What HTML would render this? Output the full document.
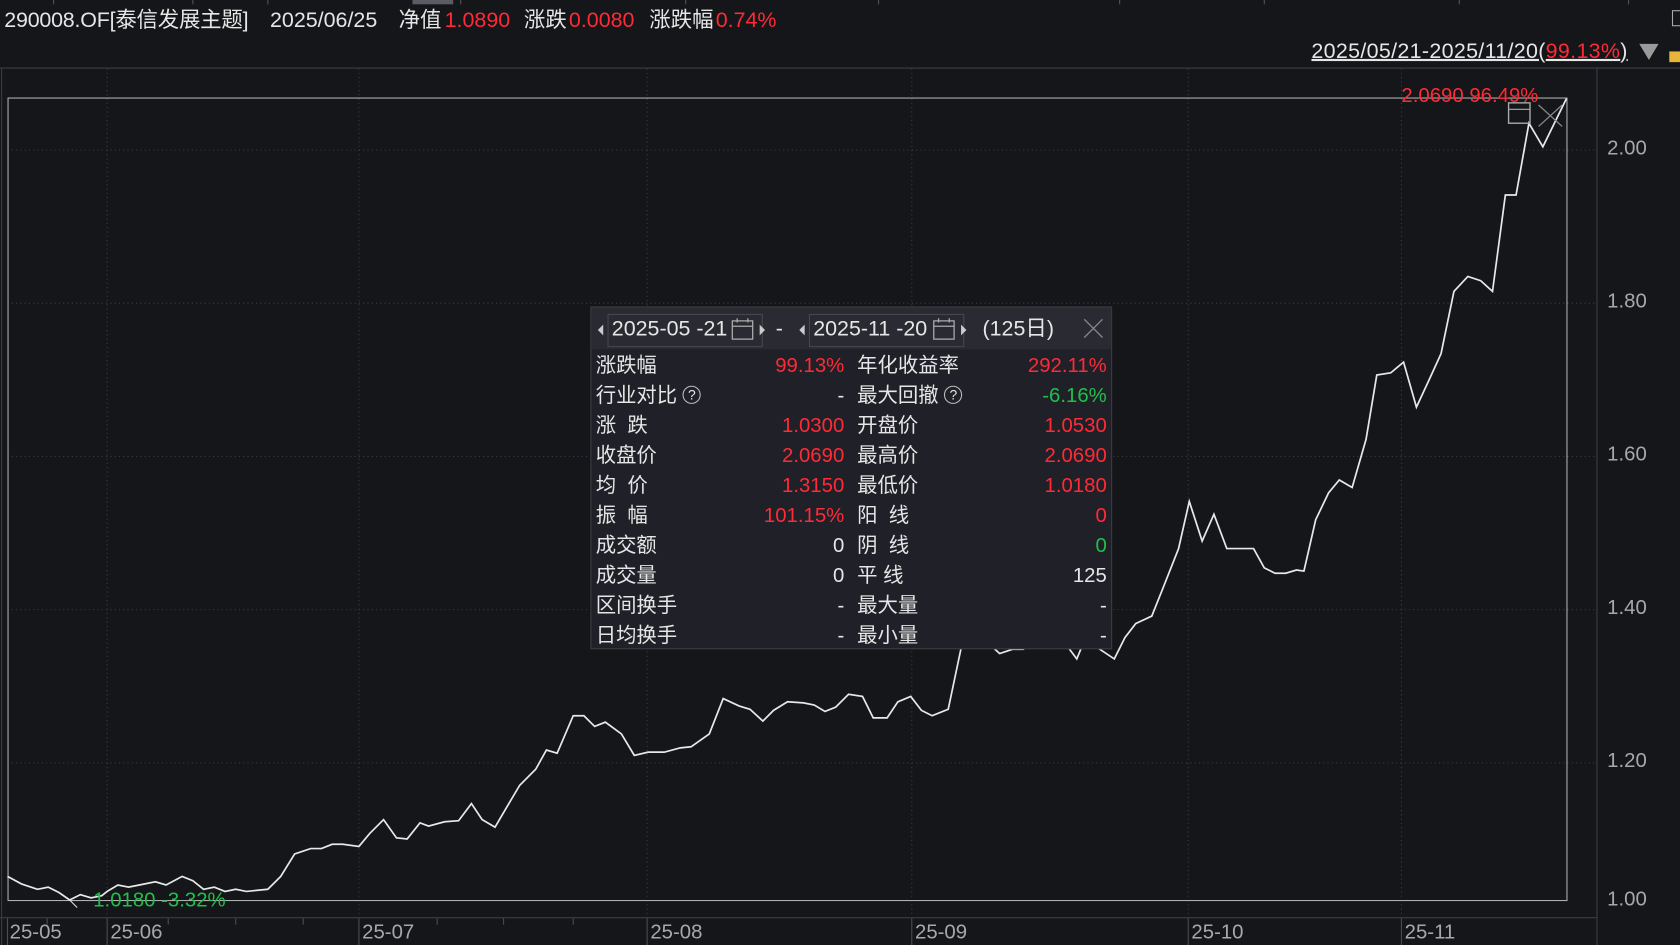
<!DOCTYPE html>
<html><head><meta charset="utf-8"><style>
html,body{margin:0;padding:0;background:#141619;width:1680px;height:945px;overflow:hidden}
#w{position:absolute;left:0;top:0;width:1568px;height:882px;transform:scale(1.0714286);transform-origin:0 0;font-family:"Liberation Sans","Noto Sans CJK SC",sans-serif;color:#e6e6e6}
.t{position:absolute;white-space:nowrap}
.r{color:#ff2a36}.g{color:#1fc04a}
.h{position:absolute;top:7px;font-size:20px;line-height:24px;height:24px;white-space:nowrap}
.ax{position:absolute;font-size:19px;color:#a8a8a8;white-space:nowrap}
#p{position:absolute;left:551px;top:286px;width:487px;height:320px;background:#202128;border:1px solid #3a3c44;box-sizing:border-box;font-size:19px}
#ph{position:absolute;left:0;top:0;width:100%;height:39px;background:#2a2b32}
.row{position:absolute;left:0;width:100%;height:28px;line-height:28px}
.row span{position:absolute}
.q{font-size:13px;border:1.5px solid #bbb;border-radius:50%;display:inline-block;width:15px;height:15px;line-height:15px;text-align:center;position:static!important;vertical-align:2px}
</style></head><body><div id="w">
<svg width="1568" height="882" style="position:absolute;left:0;top:0">
<rect x="385" y="0" width="38" height="4" fill="#5a5b63"/>
<g stroke="#555" stroke-width="1">
<line x1="50" y1="0" x2="50" y2="4"/><line x1="180" y1="0" x2="180" y2="4"/><line x1="250" y1="0" x2="250" y2="4"/><line x1="430" y1="0" x2="430" y2="4"/><line x1="640" y1="0" x2="640" y2="4"/><line x1="820" y1="0" x2="820" y2="4"/><line x1="1045" y1="0" x2="1045" y2="4"/><line x1="1180" y1="0" x2="1180" y2="4"/><line x1="1362" y1="0" x2="1362" y2="4"/><line x1="1520" y1="0" x2="1520" y2="4"/>
</g>
<line x1="0" y1="63.5" x2="1568" y2="63.5" stroke="#3a3d44"/>
<line x1="1.5" y1="64" x2="1.5" y2="882" stroke="#3a3d44"/>
<line x1="1490.5" y1="64" x2="1490.5" y2="882" stroke="#3a3d44"/>
<line x1="0" y1="856.5" x2="1490" y2="856.5" stroke="#3a3d44"/>
<g stroke="#3c3f46" stroke-dasharray="1,3">
<line x1="7" y1="140" x2="1490" y2="140"/><line x1="7" y1="283" x2="1490" y2="283"/><line x1="7" y1="426" x2="1490" y2="426"/><line x1="7" y1="569" x2="1490" y2="569"/><line x1="7" y1="712" x2="1490" y2="712"/>
<line x1="100" y1="64" x2="100" y2="856"/><line x1="335" y1="64" x2="335" y2="856"/><line x1="604" y1="64" x2="604" y2="856"/><line x1="851" y1="64" x2="851" y2="856"/><line x1="1109" y1="64" x2="1109" y2="856"/><line x1="1308" y1="64" x2="1308" y2="856"/>
</g>
<g stroke="#4a4d55"><line x1="7" y1="857" x2="7" y2="882"/><line x1="100" y1="857" x2="100" y2="882"/><line x1="335" y1="857" x2="335" y2="882"/><line x1="604" y1="857" x2="604" y2="882"/><line x1="851" y1="857" x2="851" y2="882"/><line x1="1109" y1="857" x2="1109" y2="882"/><line x1="1308" y1="857" x2="1308" y2="882"/>
<line x1="44" y1="857" x2="44" y2="863"/><line x1="157" y1="857" x2="157" y2="863"/><line x1="220" y1="857" x2="220" y2="863"/><line x1="283" y1="857" x2="283" y2="863"/><line x1="408" y1="857" x2="408" y2="863"/><line x1="470" y1="857" x2="470" y2="863"/><line x1="535" y1="857" x2="535" y2="863"/></g>
<rect x="7.5" y="91.5" width="1455" height="749" fill="none" stroke="#b0b0b0" stroke-width="1"/>
<polyline fill="none" stroke="#e8e8e8" stroke-width="1.6" points="7,818 20,825 35,830 45,828 55,833 65,840 75,835 85,838 95,836 100,832 110,826 120,828 130,826 145,823 155,826 170,818 180,822 190,830 200,828 210,832 220,830 230,832 250,830 262,818 275,797 290,792 300,792 310,788 320,788 335,790 345,778 358,765 370,782 380,783 392,768 400,771 415,767 428,766 440,750 450,765 462,772 472,755 485,733 500,718 510,700 520,703 535,668 545,668 555,678 565,674 580,685 592,705 605,702 620,702 635,698 645,697 662,685 675,652 690,659 700,662 712,673 722,663 735,655 750,656 760,658 770,664 780,660 792,648 805,650 815,670 828,670 838,655 850,650 860,663 870,668 885,662 897,605 910,600 922,600 933,610 945,606 955,606 965,600 980,605 990,595 1005,615 1012,598 1025,605 1040,615 1050,595 1060,582 1075,575 1085,550 1100,512 1110,468 1122,505 1133,480 1145,512 1158,512 1170,512 1180,530 1190,535 1200,535 1210,532 1217,533 1228,485 1240,460 1250,448 1262,455 1275,410 1285,350 1298,348 1310,338 1322,380 1335,352 1345,330 1357,272 1370,258 1382,262 1393,272 1405,182 1415,182 1427,115 1440,137 1462,92"/>
<line x1="65" y1="840" x2="72" y2="847" stroke="#ddd"/>
<rect x="1408" y="96" width="20" height="19" fill="none" stroke="#aaa" stroke-width="1.3"/><line x1="1408" y1="102" x2="1428" y2="102" stroke="#aaa"/>
<line x1="1436" y1="98" x2="1458" y2="118" stroke="#888" stroke-width="1.2"/><line x1="1458" y1="98" x2="1436" y2="118" stroke="#888" stroke-width="1.2"/>
<polygon points="1530,41 1548,41 1539,56" fill="#9a9a9a"/>
<rect x="1558" y="48" width="10" height="10" fill="#e7b53a"/>
<rect x="1561" y="10" width="8" height="14" fill="none" stroke="#aaa"/>
</svg>
<div class="h" style="left:4px;letter-spacing:-0.2px">290008.OF[泰信发展主题]</div>
<div class="h" style="left:252px">2025/06/25</div>
<div class="h" style="left:372px">净值</div><div class="h r" style="left:415px">1.0890</div>
<div class="h" style="left:489px">涨跌</div><div class="h r" style="left:531px">0.0080</div>
<div class="h" style="left:606px">涨跌幅</div><div class="h r" style="left:668px">0.74%</div>
<div class="t" style="left:1224px;top:36px;font-size:20px;line-height:24px;text-decoration:underline;letter-spacing:0.3px">2025/05/21-2025/11/20(<span class="r">99.13%</span>)</div>
<div class="t r" style="left:1308px;top:79px;font-size:19px">2.0690 96.49%</div>
<div class="t g" style="left:87px;top:830px;font-size:19px">1.0180 -3.32%</div>
<div class="ax" style="left:1500px;top:128px">2.00</div>
<div class="ax" style="left:1500px;top:271px">1.80</div>
<div class="ax" style="left:1500px;top:414px">1.60</div>
<div class="ax" style="left:1500px;top:557px">1.40</div>
<div class="ax" style="left:1500px;top:700px">1.20</div>
<div class="ax" style="left:1500px;top:829px">1.00</div>
<div class="ax" style="left:9px;top:860px">25-05</div>
<div class="ax" style="left:103px;top:860px">25-06</div>
<div class="ax" style="left:338px;top:860px">25-07</div>
<div class="ax" style="left:607px;top:860px">25-08</div>
<div class="ax" style="left:854px;top:860px">25-09</div>
<div class="ax" style="left:1112px;top:860px">25-10</div>
<div class="ax" style="left:1311px;top:860px">25-11</div>
<div id="p">
<div id="ph"></div>
<svg style="position:absolute;left:0;top:0" width="487" height="40">
<rect x="15.5" y="6.5" width="144" height="30" fill="none" stroke="#45474f"/>
<rect x="203.5" y="6.5" width="144" height="30" fill="none" stroke="#45474f"/>
<polygon points="11,16 11,26 6,21" fill="#ccc"/>
<polygon points="157,16 157,26 162,21" fill="#ccc"/>
<polygon points="199,16 199,26 194,21" fill="#ccc"/>
<polygon points="345,16 345,26 350,21" fill="#ccc"/>
<g fill="none" stroke="#aaa" stroke-width="1.2">
<rect x="131.5" y="12.5" width="19" height="17"/><line x1="131.5" y1="17.5" x2="150.5" y2="17.5"/><line x1="136" y1="10" x2="136" y2="14"/><line x1="146" y1="10" x2="146" y2="14"/>
<rect x="319.5" y="12.5" width="19" height="17"/><line x1="319.5" y1="17.5" x2="338.5" y2="17.5"/><line x1="324" y1="10" x2="324" y2="14"/><line x1="334" y1="10" x2="334" y2="14"/>
</g>
<path d="M460 11L477 28M477 11L460 28" stroke="#888" stroke-width="1.2"/>
</svg>
<div class="t" style="left:19px;top:8px;font-size:20px;line-height:24px">2025-05 -21</div>
<div class="t" style="left:172px;top:8px;font-size:20px;line-height:24px">-</div>
<div class="t" style="left:207px;top:8px;font-size:20px;line-height:24px">2025-11 -20</div>
<div class="t" style="left:365px;top:8px;font-size:20px;line-height:24px">(125日)</div>
<div class="row" style="top:41px"><span style="left:4px">涨跌幅</span><span class="r" style="right:249px">99.13%</span><span style="left:248px">年化收益率</span><span class="r" style="right:4px">292.11%</span></div>
<div class="row" style="top:69px"><span style="left:4px">行业对比 <span class="q">?</span></span><span style="right:249px">-</span><span style="left:248px">最大回撤 <span class="q">?</span></span><span class="g" style="right:4px">-6.16%</span></div>
<div class="row" style="top:97px"><span style="left:4px">涨&nbsp;&nbsp;跌</span><span class="r" style="right:249px">1.0300</span><span style="left:248px">开盘价</span><span class="r" style="right:4px">1.0530</span></div>
<div class="row" style="top:125px"><span style="left:4px">收盘价</span><span class="r" style="right:249px">2.0690</span><span style="left:248px">最高价</span><span class="r" style="right:4px">2.0690</span></div>
<div class="row" style="top:153px"><span style="left:4px">均&nbsp;&nbsp;价</span><span class="r" style="right:249px">1.3150</span><span style="left:248px">最低价</span><span class="r" style="right:4px">1.0180</span></div>
<div class="row" style="top:181px"><span style="left:4px">振&nbsp;&nbsp;幅</span><span class="r" style="right:249px">101.15%</span><span style="left:248px">阳&nbsp;&nbsp;线</span><span class="r" style="right:4px">0</span></div>
<div class="row" style="top:209px"><span style="left:4px">成交额</span><span style="right:249px">0</span><span style="left:248px">阴&nbsp;&nbsp;线</span><span class="g" style="right:4px">0</span></div>
<div class="row" style="top:237px"><span style="left:4px">成交量</span><span style="right:249px">0</span><span style="left:248px">平 线</span><span style="right:4px">125</span></div>
<div class="row" style="top:265px"><span style="left:4px">区间换手</span><span style="right:249px">-</span><span style="left:248px">最大量</span><span style="right:4px">-</span></div>
<div class="row" style="top:293px"><span style="left:4px">日均换手</span><span style="right:249px">-</span><span style="left:248px">最小量</span><span style="right:4px">-</span></div>
</div>
</div></body></html>
